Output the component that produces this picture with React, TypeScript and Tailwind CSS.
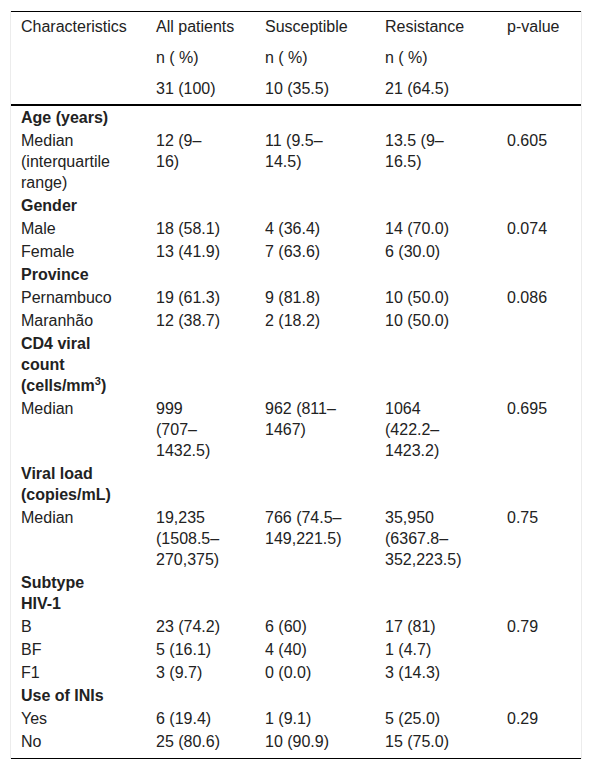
import React from "react";

type Row = {
  label: React.ReactNode;
  bold?: boolean;
  cells?: React.ReactNode[];
};

const rows: Row[] = [
  { label: "Age (years)", bold: true },
  {
    label: (
      <>
        Median
        <br />
        (interquartile
        <br />
        range)
      </>
    ),
    cells: [
      <>
        12 (9–
        <br />
        16)
      </>,
      <>
        11 (9.5–
        <br />
        14.5)
      </>,
      <>
        13.5 (9–
        <br />
        16.5)
      </>,
      "0.605",
    ],
  },
  { label: "Gender", bold: true },
  { label: "Male", cells: ["18 (58.1)", "4 (36.4)", "14 (70.0)", "0.074"] },
  { label: "Female", cells: ["13 (41.9)", "7 (63.6)", "6 (30.0)", ""] },
  { label: "Province", bold: true },
  { label: "Pernambuco", cells: ["19 (61.3)", "9 (81.8)", "10 (50.0)", "0.086"] },
  { label: "Maranhão", cells: ["12 (38.7)", "2 (18.2)", "10 (50.0)", ""] },
  {
    label: (
      <>
        CD4 viral
        <br />
        count
        <br />
        (cells/mm<sup className="text-[11px]">3</sup>)
      </>
    ),
    bold: true,
  },
  {
    label: "Median",
    cells: [
      <>
        999
        <br />
        (707–
        <br />
        1432.5)
      </>,
      <>
        962 (811–
        <br />
        1467)
      </>,
      <>
        1064
        <br />
        (422.2–
        <br />
        1423.2)
      </>,
      "0.695",
    ],
  },
  {
    label: (
      <>
        Viral load
        <br />
        (copies/mL)
      </>
    ),
    bold: true,
  },
  {
    label: "Median",
    cells: [
      <>
        19,235
        <br />
        (1508.5–
        <br />
        270,375)
      </>,
      <>
        766 (74.5–
        <br />
        149,221.5)
      </>,
      <>
        35,950
        <br />
        (6367.8–
        <br />
        352,223.5)
      </>,
      "0.75",
    ],
  },
  {
    label: (
      <>
        Subtype
        <br />
        HIV-1
      </>
    ),
    bold: true,
  },
  { label: "B", cells: ["23 (74.2)", "6 (60)", "17 (81)", "0.79"] },
  { label: "BF", cells: ["5 (16.1)", "4 (40)", "1 (4.7)", ""] },
  { label: "F1", cells: ["3 (9.7)", "0 (0.0)", "3 (14.3)", ""] },
  { label: "Use of INIs", bold: true },
  { label: "Yes", cells: ["6 (19.4)", "1 (9.1)", "5 (25.0)", "0.29"] },
  { label: "No", cells: ["25 (80.6)", "10 (90.9)", "15 (75.0)", ""] },
];

const headTd = "pl-[10px] h-[31px] align-middle whitespace-nowrap";
const bodyTd = "pl-[10px] py-px align-top whitespace-nowrap leading-[21px]";

export default function App() {
  return (
    <div className="bg-white w-[592px] h-[771px] pt-[11px] pl-[10px] font-['Liberation_Sans',Arial,sans-serif] text-[16px] text-[#222]">
      <div className="w-[572px] border-x border-[#ececec]">
        <table className="table-fixed w-[570px] border-collapse">
          <colgroup>
            <col className="w-[135px]" />
            <col className="w-[109px]" />
            <col className="w-[120px]" />
            <col className="w-[122px]" />
            <col className="w-[84px]" />
          </colgroup>
          <thead>
            <tr className="border-t border-black">
              <td className={headTd}>Characteristics</td>
              <td className={headTd}>All patients</td>
              <td className={headTd}>Susceptible</td>
              <td className={headTd}>Resistance</td>
              <td className={headTd}>p-value</td>
            </tr>
            <tr>
              <td className={headTd}></td>
              <td className={headTd}>n ( %)</td>
              <td className={headTd}>n ( %)</td>
              <td className={headTd}>n ( %)</td>
              <td className={headTd}></td>
            </tr>
            <tr className="border-b-2 border-black">
              <td className={headTd}></td>
              <td className={headTd}>31 (100)</td>
              <td className={headTd}>10 (35.5)</td>
              <td className={headTd}>21 (64.5)</td>
              <td className={headTd}></td>
            </tr>
          </thead>
          <tbody>
            {rows.map((r, i) => {
              const last = i === rows.length - 1;
              return (
                <tr key={i} className={last ? "border-b border-black" : ""}>
                  <td className={`${bodyTd} ${r.bold ? "font-bold" : ""} ${last ? "pb-[6px]" : ""}`}>
                    {r.label}
                  </td>
                  {[0, 1, 2, 3].map((c) => (
                    <td key={c} className={`${bodyTd} ${last ? "pb-[6px]" : ""}`}>
                      {r.cells ? r.cells[c] : ""}
                    </td>
                  ))}
                </tr>
              );
            })}
          </tbody>
        </table>
      </div>
    </div>
  );
}
